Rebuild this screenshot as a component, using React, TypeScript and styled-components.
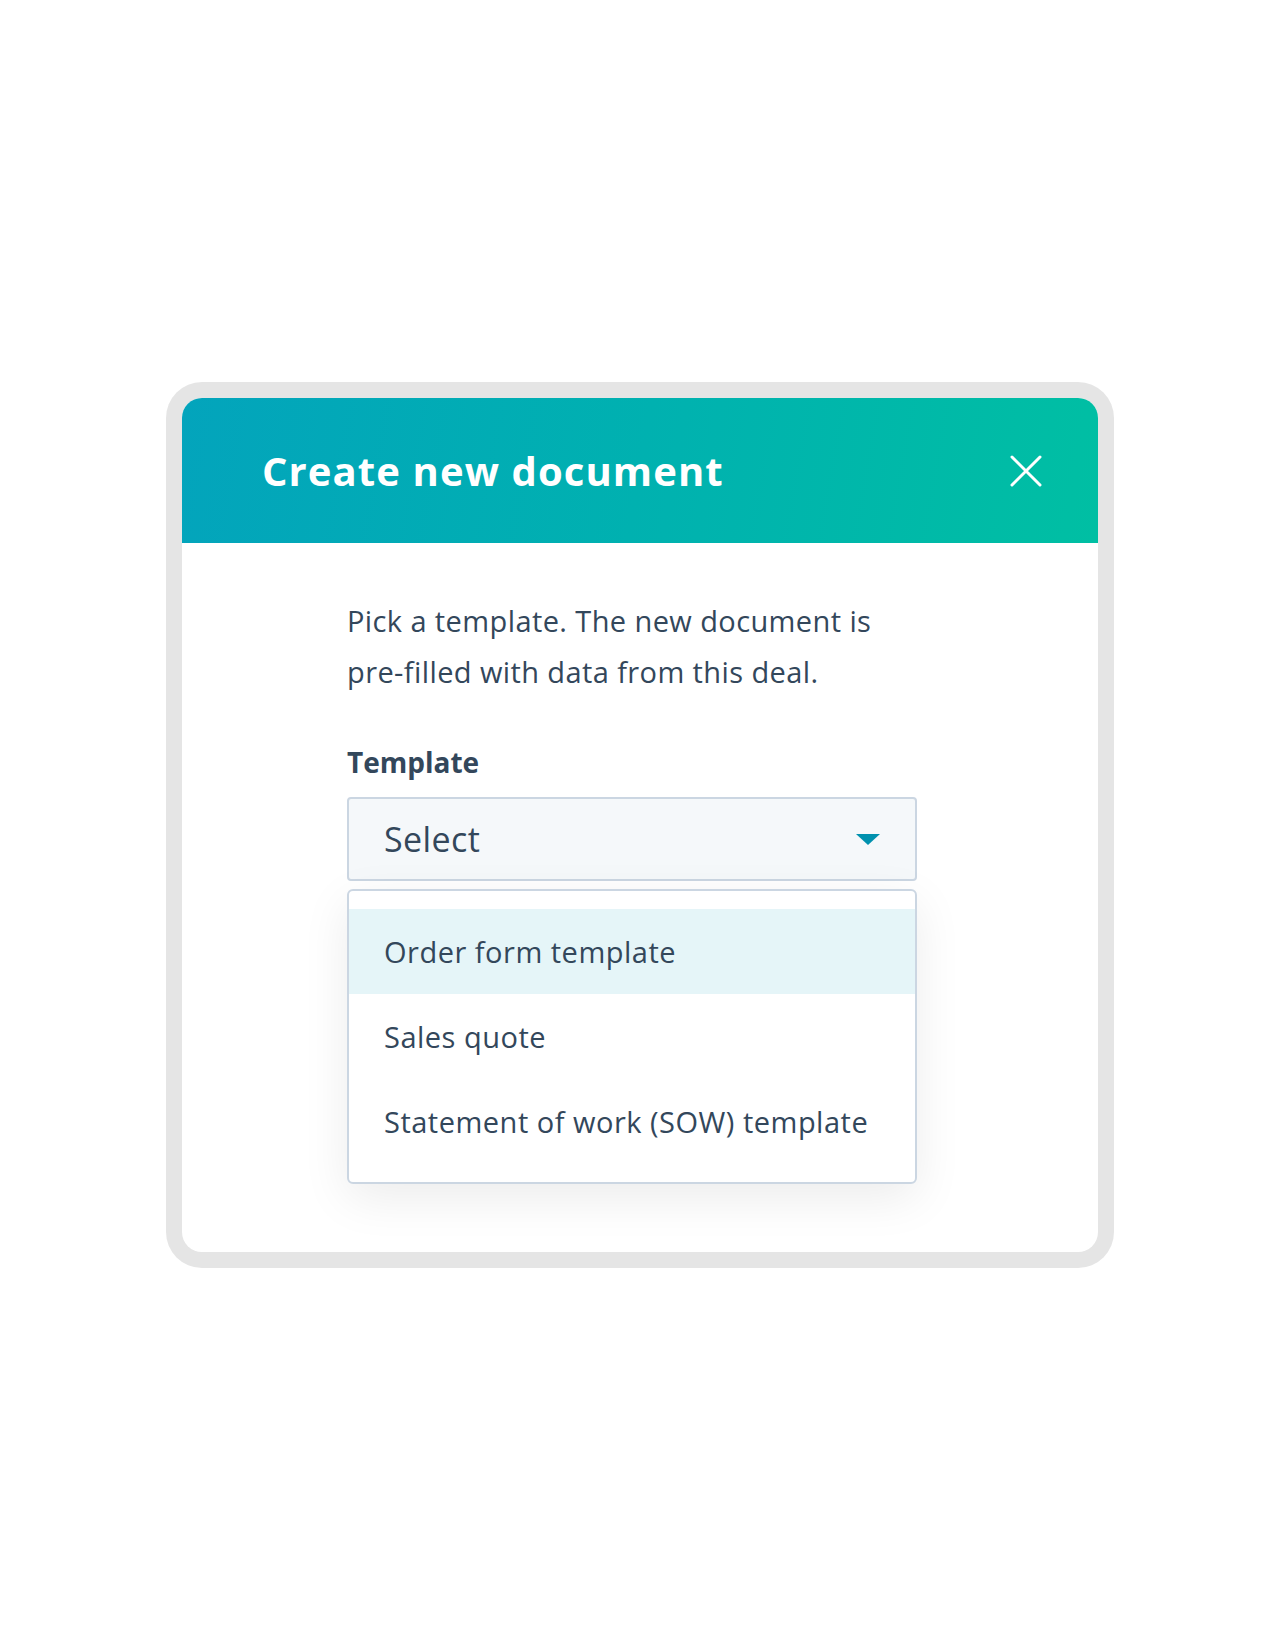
import React from 'react';
import styled, { createGlobalStyle } from 'styled-components';

const GlobalStyle = createGlobalStyle`
	body {
		margin: 0;
		background: #ffffff;
		font-family: 'Open Sans', 'Lato', sans-serif;
		color: #33475b;
	}
`;

const templates = ['Order form template', 'Sales quote', 'Statement of work (SOW) template'];

const CloseIcon: React.FC = () => (
	<svg width="32" height="32" viewBox="0 0 32 32" fill="none">
		<path d="M2 2L30 30M30 2L2 30" stroke="#ffffff" strokeWidth="3" strokeLinecap="round" />
	</svg>
);

export default function App() {
	return (
		<>
			<GlobalStyle />
			<Page>
				<Frame>
					<Card>
						<Header>
							<Title>Create new document</Title>
							<CloseButton aria-label="Close">
								<CloseIcon />
							</CloseButton>
						</Header>

						<Body>
							<Intro>
								Pick a template. The new document is
								<br />
								pre-filled with data from this deal.
							</Intro>

							<Label>Template</Label>
							<SelectBox>
								<span>Select</span>
								<Caret />
							</SelectBox>

							<Menu>
								{templates.map((name, i) => (
									<Option key={name} active={i === 0}>
										{name}
									</Option>
								))}
							</Menu>
						</Body>
					</Card>
				</Frame>
			</Page>
		</>
	);
}

const Page = styled.div`
	min-height: 1648px;
	display: flex;
	justify-content: center;
	align-items: flex-start;
	padding-top: 382px;
	box-sizing: border-box;
`;

const Frame = styled.div`
	width: 948px;
	padding: 16px;
	box-sizing: border-box;
	background: #e5e5e5;
	border-radius: 36px;
`;

const Card = styled.div`
	background: #ffffff;
	border-radius: 20px;
	overflow: hidden;
`;

const Header = styled.div`
	height: 145px;
	display: flex;
	align-items: center;
	justify-content: space-between;
	padding: 0 56px 0 80px;
	background: linear-gradient(100deg, #03a4bc 0%, #00b1b0 50%, #00bfa3 100%);
`;

const Title = styled.h1`
	margin: 0;
	font-family: 'Open Sans', sans-serif;
	font-weight: 700;
	font-size: 40px;
	letter-spacing: 1.1px;
	color: #ffffff;
`;

const CloseButton = styled.button`
	border: none;
	background: none;
	padding: 0;
	display: flex;
	cursor: pointer;
`;

const Body = styled.div`
	padding: 52px 181px 68px 165px;
`;

const Intro = styled.p`
	margin: 0;
	font-size: 29px;
	line-height: 51px;
	letter-spacing: 0.4px;
`;

const Label = styled.div`
	margin-top: 46px;
	font-size: 28px;
	line-height: 38px;
	font-weight: 700;
`;

const SelectBox = styled.div`
	margin-top: 16px;
	height: 84px;
	box-sizing: border-box;
	display: flex;
	align-items: center;
	justify-content: space-between;
	padding: 0 35px 0 35px;
	background: #f5f8fa;
	border: 2px solid #cbd6e2;
	border-radius: 4px;
	font-size: 34px;
	letter-spacing: 0.4px;
`;

const Caret = styled.span`
	width: 0;
	height: 0;
	border-left: 12.5px solid transparent;
	border-right: 12.5px solid transparent;
	border-top: 11px solid #0091ae;
`;

const Menu = styled.ul`
	list-style: none;
	margin: 8px 0 0;
	padding: 18px 0 18px;
	background: #ffffff;
	border: 2px solid #cbd6e2;
	border-radius: 6px;
	box-shadow: 0 14px 48px rgba(0, 0, 0, 0.08);
`;

const Option = styled.li<{ active?: boolean }>`
	height: 85px;
	display: flex;
	align-items: center;
	padding: 0 35px;
	font-size: 29px;
	letter-spacing: 0.5px;
	background: ${(p) => (p.active ? '#e5f5f8' : 'transparent')};
`;
